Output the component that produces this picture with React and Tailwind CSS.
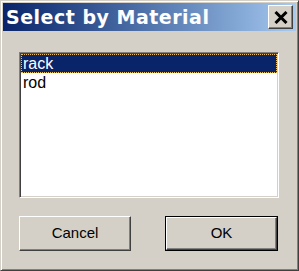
export default function App() {
  const items = ["rack", "rod"];
  const selected = 0;

  return (
    <div
      className="w-[299px] h-[271px] bg-[#d4d0c8] border border-t-[#d4d0c8] border-l-[#d4d0c8] border-r-[#404040] border-b-[#404040] shadow-[inset_1px_1px_#ffffff,inset_-1px_-1px_#808080] p-[2px] flex flex-col"
      style={{ fontFamily: '"Liberation Sans", Arial, sans-serif' }}
    >
      {/* title bar */}
      <div className="h-[28px] shrink-0 flex items-center justify-between pl-[3px] pr-[3px] bg-gradient-to-r from-[#0a246a] to-[#a6caf0]">
        <span
          className="text-white font-bold text-[19px] tracking-[0.5px] leading-none"
          style={{ fontFamily: '"DejaVu Sans", Verdana, sans-serif' }}
        >
          Select by Material
        </span>
        <button className="w-[25px] h-[24px] bg-[#d4d0c8] border border-t-white border-l-white border-r-[#404040] border-b-[#404040] shadow-[inset_-1px_-1px_#808080] flex items-center justify-center">
          <svg width="14" height="13" viewBox="0 0 14 13">
            <path d="M1.5 1 L12.5 12 M12.5 1 L1.5 12" stroke="#000" strokeWidth="3" />
          </svg>
        </button>
      </div>

      {/* list */}
      <div className="ml-[16px] mt-[21px] w-[260px] h-[146px] bg-white border border-t-[#808080] border-l-[#808080] border-r-white border-b-white shadow-[inset_1px_1px_#404040,inset_-1px_-1px_#d4d0c8] p-[1px]">
        {items.map((name, i) => (
          <div
            key={name}
            className={`h-[19px] leading-[19px] text-[16px] pl-[2px] ${
              i === selected
                ? "bg-[#0a246a] text-white outline-1 outline-dotted outline-[#f0c060] -outline-offset-1"
                : "text-black"
            }`}
          >
            {name}
          </div>
        ))}
      </div>

      {/* buttons */}
      <div className="ml-[16px] mt-[18px] flex gap-[34px]">
        <button className="w-[112px] h-[35px] bg-[#d4d0c8] border border-t-white border-l-white border-r-[#404040] border-b-[#404040] shadow-[inset_-1px_-1px_#808080] text-[15px] text-black">
          Cancel
        </button>
        <div className="w-[113px] h-[35px] border border-black">
          <button className="w-full h-full bg-[#d4d0c8] border border-t-white border-l-white border-r-[#404040] border-b-[#404040] shadow-[inset_-1px_-1px_#808080] text-[15px] text-black">
            OK
          </button>
        </div>
      </div>
    </div>
  );
}
